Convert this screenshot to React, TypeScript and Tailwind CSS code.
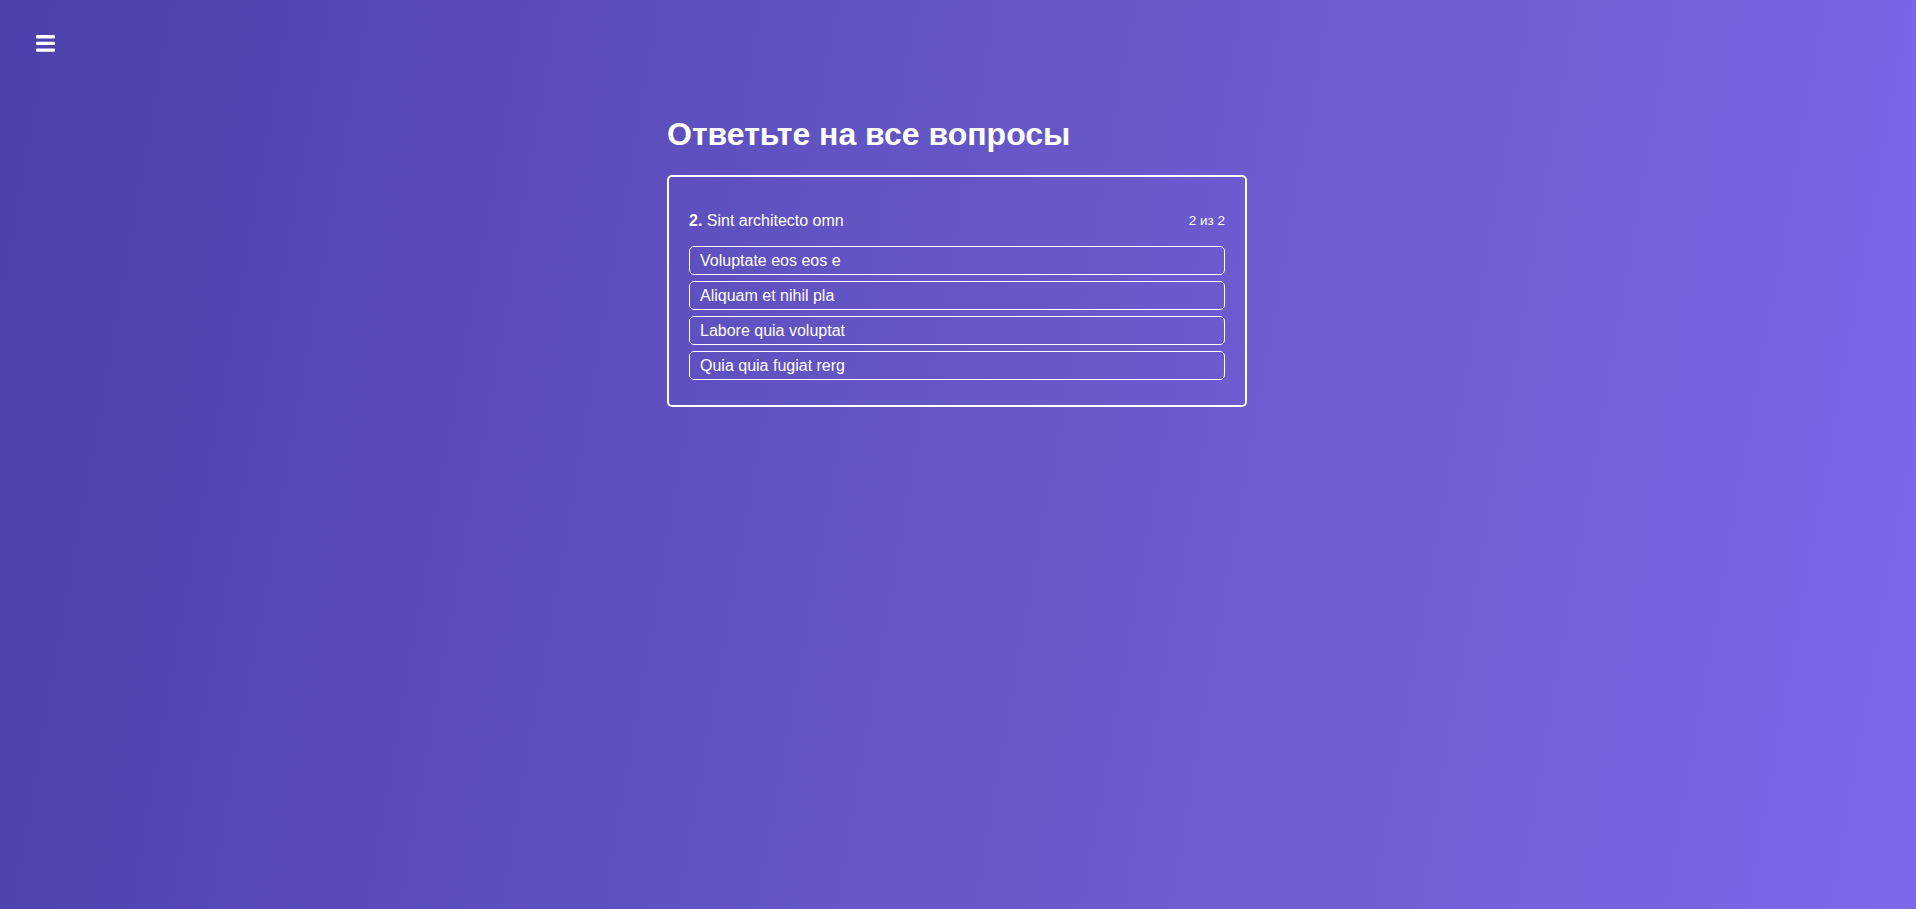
const options = [
  "Voluptate eos eos e",
  "Aliquam et nihil pla",
  "Labore quia voluptat",
  "Quia quia fugiat rerg",
];

function MenuIcon() {
  return (
    <svg width="19" height="17" viewBox="0 0 19 17" fill="white">
      <rect x="0" y="0" width="19" height="3.4" rx="1" />
      <rect x="0" y="6.7" width="19" height="3.4" rx="1" />
      <rect x="0" y="13.4" width="19" height="3.4" rx="1" />
    </svg>
  );
}

export default function App() {
  return (
    <main
      className="min-h-screen bg-[linear-gradient(100deg,#4c40ac_0%,#6557c7_50%,#7b69e8_100%)] text-white"
      style={{ fontFamily: '"Liberation Sans", Arial, sans-serif' }}
    >
      {/* меню */}
      <div className="pl-[36px] pt-[35px]">
        <button className="block cursor-pointer">
          <MenuIcon />
        </button>
      </div>

      <section className="mx-auto mt-[64px] w-[580px] -translate-x-px">
        <h1 className="text-[32px] font-bold leading-[37px]">Ответьте на все вопросы</h1>

        <div className="mt-[22px] rounded-[5px] border-2 border-white px-5 pt-[34px] pb-[25px]">
          <div className="flex items-center justify-between h-[20px]">
            <p className="text-[16px] leading-[20px]">
              <b>2.</b> Sint architecto omn
            </p>
            <span className="text-[13.5px] leading-[20px]">2 из 2</span>
          </div>

          <div className="mt-[15px] flex flex-col gap-[6px]">
            {options.map((o) => (
              <button
                key={o}
                className="h-[29px] rounded-[5px] border border-white px-[10px] text-left text-[16px] leading-[18px] cursor-pointer"
              >
                {o}
              </button>
            ))}
          </div>
        </div>
      </section>
    </main>
  );
}
